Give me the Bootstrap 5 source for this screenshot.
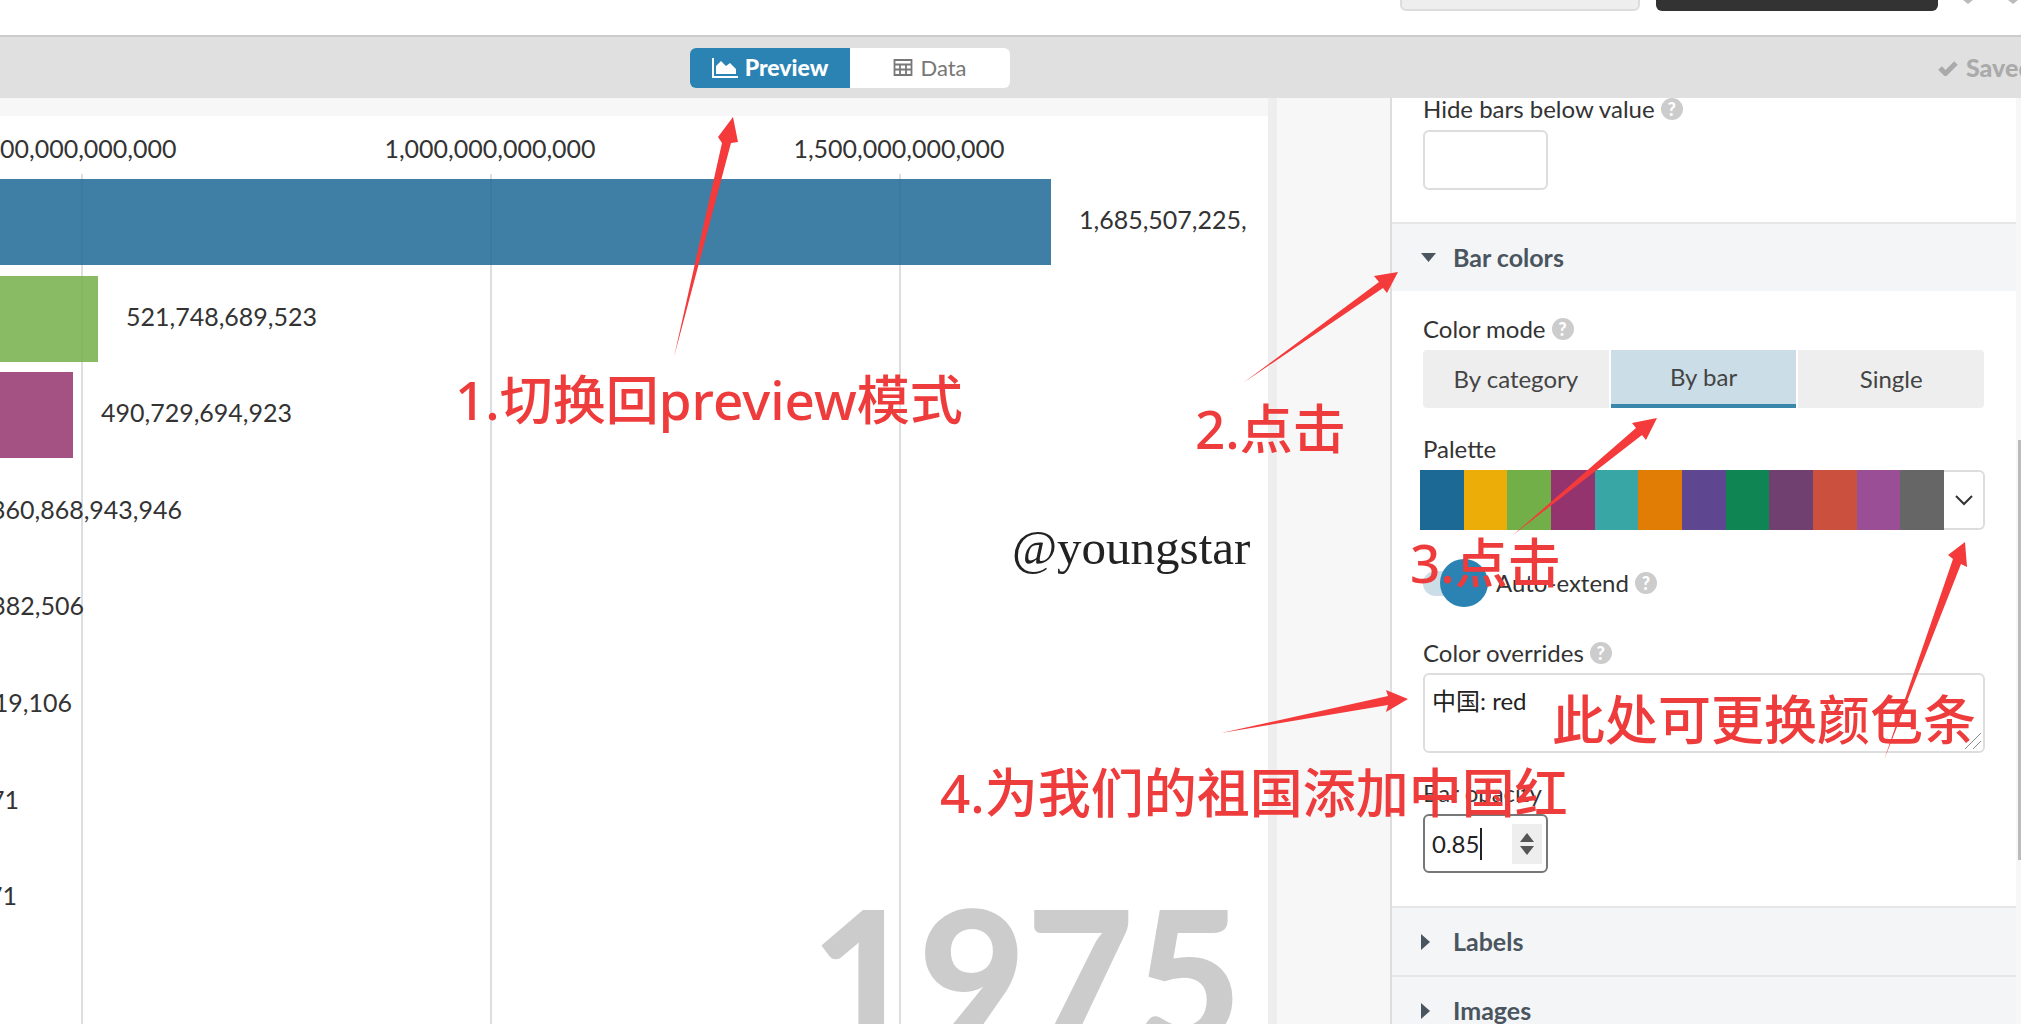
<!DOCTYPE html>
<html lang="en">
<head>
  <meta charset="UTF-8">
  <meta name="viewport" content="width=device-width, initial-scale=1.0">
  <title>Bar chart race editor</title>
  <link href="https://cdn.jsdelivr.net/npm/bootstrap@5.3.0/dist/css/bootstrap.min.css" rel="stylesheet">
  <style>
    html, body { height: 100%; }
    body {
      overflow: hidden;
      background: #fff;
      color: #333;
      font-family: Lato, "Noto Sans CJK SC", sans-serif;
      font-size: 24px;
    }
    .page { position: relative; width: 2021px; height: 1024px; overflow: hidden; }

    .top-strip { height: 37px; border-bottom: 2px solid #ccc; overflow: hidden; padding-left: 1400px; }
    .ghost-btn { width: 240px; height: 48px; margin-top: -37px; background: #eee; border: 2px solid #ddd; border-radius: 6px; flex: none; }
    .dark-btn { width: 282px; height: 48px; margin-top: -37px; margin-left: 16px; background: #333; border-radius: 6px; flex: none; }
    .undo-mark { margin-left: 25px; flex: none; }
    .redo-mark { margin-left: 35px; flex: none; }

    .tool-strip { height: 61px; background: #e0e0e0; padding-left: 690px; overflow: hidden; }
    .view-toggle { width: 320px; height: 40px; background: #fff; border-radius: 6px; overflow: hidden; flex: none; }
    .view-btn { width: 160px; color: #777; font-size: 22px; gap: 7px; }
    .view-btn.is-on { background: #2a83b3; color: #fff; font-weight: 900; font-size: 23px; }
    .saved-flag { margin-left: 928px; gap: 8px; color: #aaa; font-weight: 900; font-size: 25px; white-space: nowrap; flex: none; }

    .work-area { height: 926px; background: #f7f7f7; }
    .chart-col { width: 1268px; padding-top: 18px; flex: none; }
    .chart-sheet { position: relative; height: 908px; background: #fff; overflow: hidden; font-size: 25px; }
    .scroll-gutter { width: 9px; flex: none; background: #eee; }
    .panel-gap { width: 113px; flex: none; }

    .axis-tick { position: absolute; top: 0; bottom: 0; width: 0; }
    .axis-tick span { position: absolute; top: 15px; transform: translateX(-50%); white-space: nowrap; line-height: 34px; }
    .axis-tick::after { content: ""; position: absolute; top: 58px; bottom: 0; left: 0; width: 2px; background: #dcdfe2; }
    .axis-row { height: 58px; }
    .bar-row { position: relative; height: 96.6px; gap: 28px; }
    .bar-fill { height: 86px; opacity: .85; flex: none; }
    .bar-value { white-space: nowrap; padding-bottom: 5px; }
    .clip-value { overflow: hidden; white-space: nowrap; justify-content: flex-end; padding-bottom: 5px; }
    .year-mark { position: absolute; right: 26px; top: 765px; color: #ccc; font-size: 186px; font-weight: 900; line-height: 1; }

    .side-panel { width: 631px; flex: none; background: #fff; border-left: 2px solid #ddd; overflow: hidden; }
    .panel-body { padding: 0 0 0 31px; width: 594px; }
    .field-label { font-size: 24px; line-height: 28px; gap: 6px; }
    .help-dot {
      width: 22px; height: 22px; flex: none; border-radius: 50%;
      background: #ccc; color: #fff; font-size: 18px; font-weight: 900;
    }
    .hide-label { margin-top: -3px; }
    .mini-input { width: 125px; height: 60px; margin-top: 7px; border: 2px solid #ddd; border-radius: 6px; }
    .section-head {
      height: 69px; background: #f4f5f6; border-top: 2px solid #e6e6e6;
      color: #4a5560; font-weight: 700; font-size: 25px; padding-left: 29px;
    }
    .section-head svg { width: 32px; flex: none; }
    .head-bars { margin-top: 32px; }
    .head-labels { margin-top: 33px; }
    .mode-label { margin-top: 24px; }
    .mode-group { width: 561px; height: 58px; margin-top: 7px; gap: 2px; border-radius: 4px; overflow: hidden; }
    .mode-btn { flex: 1; background: #eee; color: #444; }
    .mode-btn.is-on { background: #cbdde6; border-bottom: 4px solid #3a87ab; }
    .palette-label { margin-top: 27px; }
    .palette-row { width: 565px; height: 60px; margin-left: -3px; margin-top: 7px; }
    .swatch { flex: 1; }
    .palette-open { width: 41px; flex: none; border: 2px solid #ddd; border-left: 0; border-radius: 0 6px 6px 0; }
    .auto-row { margin-top: 39px; gap: 26px; }
    .auto-switch { width: 47px; height: 25px; border-radius: 13px; background: #cbdde6; flex: none; position: relative; }
    .auto-knob { position: absolute; left: 17px; top: -12px; width: 48px; height: 48px; border-radius: 50%; background: #2a83b3; }
    .overrides-label { margin-top: 42px; }
    .notes-box {
      width: 562px; height: 80px; margin-top: 6px; border: 2px solid #ddd; border-radius: 6px;
      padding: 8px 7px; color: #222; line-height: 36px; position: relative;
    }
    .grip { position: absolute; right: 1px; bottom: 1px; }
    .opacity-label { margin-top: 26px; }
    .num-input { width: 125px; height: 59px; margin-top: 7px; border: 2px solid #777; border-radius: 6px; padding: 0 4px 0 7px; color: #222; }
    .caret-mark { width: 2px; height: 32px; background: #222; margin-left: 1px; }
    .spin-box { width: 30px; height: 40px; background: #eee; margin-left: auto; }
    .panel-edge { width: 5px; flex: none; position: relative; background: #f7f7f7; }
    .thumb { position: absolute; left: 2px; top: 342px; width: 3px; height: 420px; background: #bbb; }

    .note-layer { position: absolute; inset: 0; pointer-events: none; }
    .note-layer svg { position: absolute; left: 0; top: 0; }
    .red-note {
      position: absolute; color: #ee3b3b; font-size: 53px; line-height: 1; font-weight: 500;
      font-family: "Noto Sans", "Noto Sans CJK SC", sans-serif; white-space: nowrap;
    }
    .note-preview { left: 455px; top: 373px; }
    .note-click { left: 1195px; top: 402px; }
    .note-bar { left: 1410px; top: 536px; }
    .note-palette { left: 1552px; top: 693px; }
    .note-red { left: 940px; top: 766px; }
    .sign-note { position: absolute; left: 1012px; top: 519px; font-family: "Liberation Serif", serif; font-size: 49px; color: #222; line-height: 1.2; white-space: nowrap; }
  </style>
</head>
<body>
  <div class="page">
    <div class="top-strip d-flex">
      <div class="ghost-btn"></div>
      <div class="dark-btn"></div>
      <svg class="undo-mark" width="10" height="4" viewBox="0 0 10 4"><path d="M0 0h10L5 4z" fill="#bbb"/></svg>
      <svg class="redo-mark" width="10" height="4" viewBox="0 0 10 4"><path d="M0 0h10L5 4z" fill="#bbb"/></svg>
    </div>

    <div class="tool-strip d-flex align-items-center">
      <div class="view-toggle d-flex">
        <div class="view-btn is-on d-flex align-items-center justify-content-center">
          <svg width="26" height="20" viewBox="0 0 26 20"><path d="M0 0h2v18h24v2H0z" fill="#fff"/><path d="M4 16V8l5-5 5 5 4-3 6 6v5z" fill="#fff"/></svg>
          Preview
        </div>
        <div class="view-btn d-flex align-items-center justify-content-center">
          <svg width="20" height="17" viewBox="0 0 20 17"><path d="M1.500 1h17v15h-17zM1 5.500h18M1 10.500h18M7 5v11M13 5v11" fill="none" stroke="#777" stroke-width="1.800"/></svg>
          Data
        </div>
      </div>
      <div class="saved-flag d-flex align-items-center">
        <svg width="20" height="16" viewBox="0 0 20 16"><path d="M2 8l5.500 5.500L18 3" fill="none" stroke="#aaa" stroke-width="5"/></svg>
        Saved
      </div>
    </div>

    <div class="work-area d-flex">
      <div class="chart-col">
        <div class="chart-sheet">
          <div class="axis-tick" style="left: 81px"><span>500,000,000,000</span></div>
          <div class="axis-tick" style="left: 490px"><span>1,000,000,000,000</span></div>
          <div class="axis-tick" style="left: 899px"><span>1,500,000,000,000</span></div>
          <div class="axis-row"></div>
          <div class="bar-row d-flex align-items-center"><div class="bar-fill" style="width: 1051px; background: #1d6996"></div><span class="bar-value">1,685,507,225,</span></div>
          <div class="bar-row d-flex align-items-center"><div class="bar-fill" style="width: 98px; background: #73af48"></div><span class="bar-value">521,748,689,523</span></div>
          <div class="bar-row d-flex align-items-center"><div class="bar-fill" style="width: 73px; background: #94346e"></div><span class="bar-value">490,729,694,923</span></div>
          <div class="bar-row d-flex align-items-center"><div class="clip-value d-flex" style="width: 182px">360,868,943,946</div></div>
          <div class="bar-row d-flex align-items-center"><div class="clip-value d-flex" style="width: 84px">382,506</div></div>
          <div class="bar-row d-flex align-items-center"><div class="clip-value d-flex" style="width: 72px">19,106</div></div>
          <div class="bar-row d-flex align-items-center"><div class="clip-value d-flex" style="width: 19px">71</div></div>
          <div class="bar-row d-flex align-items-center"><div class="clip-value d-flex" style="width: 17px">71</div></div>
          <div class="year-mark">1975</div>
        </div>
      </div>
      <div class="scroll-gutter"></div>
      <div class="panel-gap"></div>

      <div class="side-panel d-flex">
        <div class="flex-grow-1">
          <div class="panel-body">
            <div class="field-label hide-label d-flex align-items-center">Hide bars below value <span class="help-dot d-flex align-items-center justify-content-center">?</span></div>
            <div class="mini-input"></div>
          </div>
          <div class="section-head head-bars d-flex align-items-center">
            <svg height="12" viewBox="0 0 32 12"><path d="M0 1h15l-7.500 9z" fill="#4a5560"/></svg>
            Bar colors
          </div>
          <div class="panel-body">
            <div class="field-label mode-label d-flex align-items-center">Color mode <span class="help-dot d-flex align-items-center justify-content-center">?</span></div>
            <div class="mode-group d-flex">
              <div class="mode-btn d-flex align-items-center justify-content-center">By category</div>
              <div class="mode-btn is-on d-flex align-items-center justify-content-center">By bar</div>
              <div class="mode-btn d-flex align-items-center justify-content-center">Single</div>
            </div>
            <div class="field-label palette-label">Palette</div>
            <div class="palette-row d-flex">
              <div class="swatch" style="background: #1d6996"></div>
              <div class="swatch" style="background: #edad08"></div>
              <div class="swatch" style="background: #73af48"></div>
              <div class="swatch" style="background: #94346e"></div>
              <div class="swatch" style="background: #38a6a5"></div>
              <div class="swatch" style="background: #e17c05"></div>
              <div class="swatch" style="background: #5f4690"></div>
              <div class="swatch" style="background: #0f8554"></div>
              <div class="swatch" style="background: #6f4070"></div>
              <div class="swatch" style="background: #cc503e"></div>
              <div class="swatch" style="background: #994e95"></div>
              <div class="swatch" style="background: #666666"></div>
              <div class="palette-open d-flex align-items-center justify-content-center">
                <svg width="20" height="12" viewBox="0 0 20 12"><path d="M2 2l8 8 8-8" fill="none" stroke="#333" stroke-width="2"/></svg>
              </div>
            </div>
            <div class="auto-row d-flex align-items-center">
              <div class="auto-switch"><div class="auto-knob"></div></div>
              <div class="field-label d-flex align-items-center">Auto-extend <span class="help-dot d-flex align-items-center justify-content-center">?</span></div>
            </div>
            <div class="field-label overrides-label d-flex align-items-center">Color overrides <span class="help-dot d-flex align-items-center justify-content-center">?</span></div>
            <div class="notes-box">中国: red
              <svg class="grip" width="18" height="18" viewBox="0 0 18 18"><path d="M17 1L1 17M17 9l-8 8" stroke="#888" fill="none"/></svg>
            </div>
            <div class="field-label opacity-label">Bar opacity</div>
            <div class="num-input d-flex align-items-center">
              0.85<span class="caret-mark"></span>
              <div class="spin-box d-flex flex-column align-items-center justify-content-center gap-1">
                <svg width="14" height="9" viewBox="0 0 14 9"><path d="M7 0l7 9H0z" fill="#555"/></svg>
                <svg width="14" height="9" viewBox="0 0 14 9"><path d="M0 0h14L7 9z" fill="#555"/></svg>
              </div>
            </div>
          </div>
          <div class="section-head head-labels d-flex align-items-center">
            <svg height="16" viewBox="0 0 32 16"><path d="M0 0l9 8-9 8z" fill="#4a5560"/></svg>
            Labels
          </div>
          <div class="section-head d-flex align-items-center">
            <svg height="16" viewBox="0 0 32 16"><path d="M0 0l9 8-9 8z" fill="#4a5560"/></svg>
            Images
          </div>
        </div>
        <div class="panel-edge"><div class="thumb"></div></div>
      </div>
    </div>

    <div class="note-layer">
      <svg width="2021" height="1024" viewBox="0 0 2021 1024">
        <g fill="#f43a3a">
          <polygon points="674,357 722,143 718,137 733,117 738,142 731,143"/>
          <polygon points="1243,383 1379,282 1374,276 1398,272 1387,293 1383,288"/>
          <polygon points="1513,535 1636,428 1632,423 1657,418 1646,440 1642,435"/>
          <polygon points="1221,733 1388,696 1386,690 1408,699 1386,712 1388,705"/>
          <polygon points="1884,760 1953,559 1948,555 1965,542 1967,567 1961,564"/>
        </g>
      </svg>
      <div class="red-note note-preview">1.切换回preview模式</div>
      <div class="red-note note-click">2.点击</div>
      <div class="red-note note-bar">3.点击</div>
      <div class="red-note note-palette">此处可更换颜色条</div>
      <div class="red-note note-red">4.为我们的祖国添加中国红</div>
      <div class="sign-note">@youngstar</div>
    </div>
  </div>
  <script src="https://cdn.jsdelivr.net/npm/bootstrap@5.3.0/dist/js/bootstrap.bundle.min.js"></script>
</body>
</html>
